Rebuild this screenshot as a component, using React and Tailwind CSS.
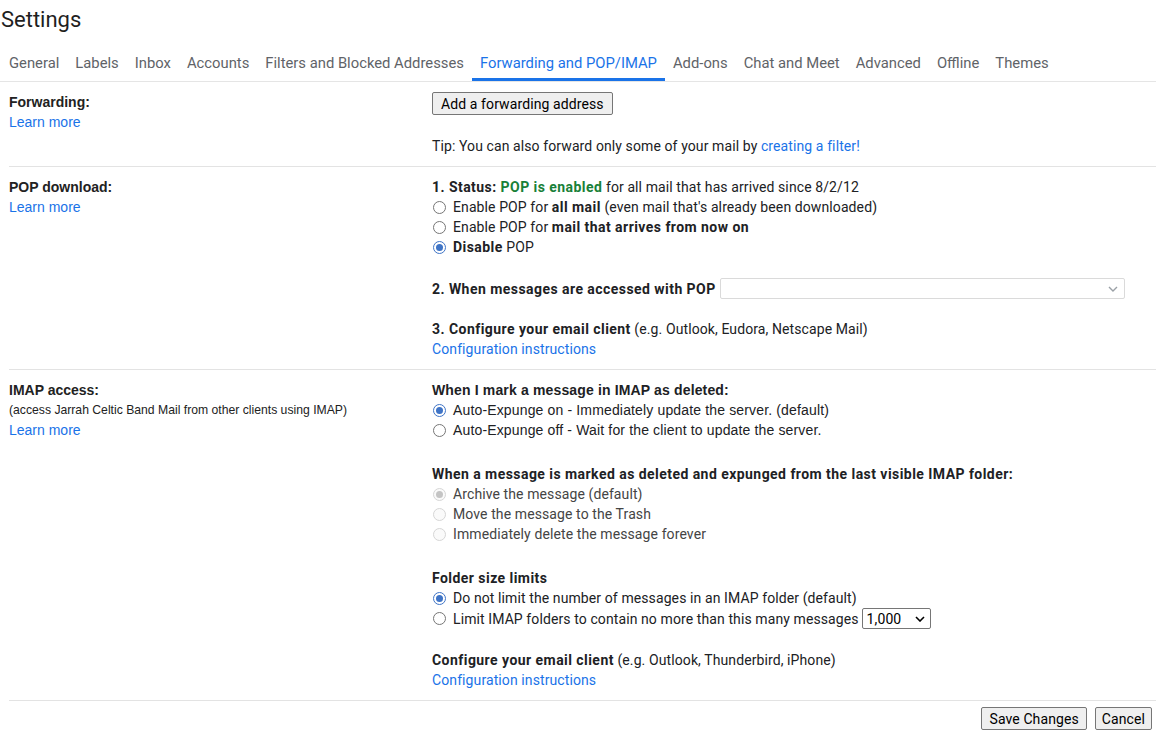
import React from 'react';

const tabs = [
  'General',
  'Labels',
  'Inbox',
  'Accounts',
  'Filters and Blocked Addresses',
  'Forwarding and POP/IMAP',
  'Add-ons',
  'Chat and Meet',
  'Advanced',
  'Offline',
  'Themes',
];

const Radio = ({ checked, disabled, children }) => {
  let ring = 'border-[#767676] bg-white';
  if (disabled) ring = 'border-[#d6d6d6] bg-[#fafafa]';
  if (checked && !disabled) ring = 'border-[#3f74c6] bg-white';
  return (
    <div className="flex items-center h-5">
      <span className={`w-[13px] h-[13px] rounded-full border flex items-center justify-center shrink-0 ml-[1px] ${ring}`}>
        {checked && (
          <span className={`w-[7px] h-[7px] rounded-full ${disabled ? 'bg-[#c4c4c4]' : 'bg-[#3f74c6]'}`} />
        )}
      </span>
      <span className={`ml-[7px] ${disabled ? 'text-[#444]' : ''}`}>{children}</span>
    </div>
  );
};

const B = ({ children, className = '' }) => (
  <b className={`font-bold tracking-[0.45px] ${className}`}>{children}</b>
);

const Link = ({ children }) => (
  <a href="#" className="text-[#1a73e8]">{children}</a>
);

const Section = ({ left, children, pb = 'pb-[10px]' }) => (
  <div className="grid grid-cols-[423px_1fr] ml-[9px] border-b border-[#e3e3e3]">
    <div className="pt-[10px] font-['Liberation_Sans',Arial,sans-serif] text-[14px] leading-5 tracking-normal text-[#222]">{left}</div>
    <div className={`pt-[10px] ${pb}`}>{children}</div>
  </div>
);

const Button = ({ children, className = '' }) => (
  <button className={`h-[23px] border border-[#767676] rounded-[2px] bg-[#efefef] text-[14px] leading-5 text-black ${className}`}>
    {children}
  </button>
);

const App = () => {
  return (
    <div className="w-[1156px] h-[739px] bg-white overflow-hidden font-['Roboto',Arial,sans-serif] text-[14px] leading-5 tracking-[0.1px] text-[#202124]">
      <div className="pl-[1px] pt-[6px] h-[36px] text-[22px] leading-[28px] tracking-normal text-[#1f1f1f]">Settings</div>

      <div className="flex border-b border-[#e5e5e5] h-[46px] pl-[1px] text-[14.8px] tracking-normal text-[#5f6368]">
        {tabs.map((t) => {
          const active = t === 'Forwarding and POP/IMAP';
          return (
            <div
              key={t}
              className={`flex items-center px-[8px] ${active ? 'text-[#1a73e8] border-b-[3px] border-[#1a73e8] pt-[11px]' : 'pt-[8px]'}`}
            >
              {t}
            </div>
          );
        })}
      </div>

      <Section
        left={
          <>
            <div className="font-bold">Forwarding:</div>
            <Link>Learn more</Link>
          </>
        }
        pb="pb-[10px]"
      >
        <Button className="px-[8px] tracking-[0.1px]">Add a forwarding address</Button>
        <div className="mt-[21px]">
          Tip: You can also forward only some of your mail by <Link>creating a filter!</Link>
        </div>
      </Section>

      <Section
        left={
          <>
            <div className="font-bold">POP download:</div>
            <Link>Learn more</Link>
          </>
        }
        pb="pb-[10px]"
      >
        <div>
          <B>1. Status: </B>
          <B className="text-[#188038]">POP is enabled</B> for all mail that has arrived since 8/2/12
        </div>
        <Radio>Enable POP for <B>all mail</B> (even mail that's already been downloaded)</Radio>
        <Radio>Enable POP for <B>mail that arrives from now on</B></Radio>
        <Radio checked><B>Disable</B> POP</Radio>
        <div className="flex items-center mt-[21px] h-[21px]">
          <B>2. When messages are accessed with POP</B>
          <div className="ml-[4px] mr-[31px] flex-1 h-[21px] border border-[#dadada] rounded-[2px] bg-white flex items-center justify-end pr-[6px]">
            <svg width="10" height="6" viewBox="0 0 10 6" fill="none" stroke="#9aa0a6" strokeWidth="1.4">
              <path d="M1 1l4 4 4-4" />
            </svg>
          </div>
        </div>
        <div className="mt-[20px]">
          <B>3. Configure your email client</B> (e.g. Outlook, Eudora, Netscape Mail)
        </div>
        <Link>Configuration instructions</Link>
      </Section>

      <Section
        left={
          <>
            <div className="font-bold">IMAP access:</div>
            <div className="text-[12.2px] leading-5 text-[#222]">(access Jarrah Celtic Band Mail from other clients using IMAP)</div>
            <Link>Learn more</Link>
          </>
        }
        pb="pb-[10px]"
      >
        <div className="font-['Liberation_Sans',Arial,sans-serif] tracking-[0.15px]">
          <b>When I mark a message in IMAP as deleted:</b>
          <Radio checked>Auto-Expunge on - Immediately update the server. (default)</Radio>
          <Radio>Auto-Expunge off - Wait for the client to update the server.</Radio>
        </div>
        <div className="mt-[24px]">
          <B>When a message is marked as deleted and expunged from the last visible IMAP folder:</B>
        </div>
        <Radio checked disabled>Archive the message (default)</Radio>
        <Radio disabled>Move the message to the Trash</Radio>
        <Radio disabled>Immediately delete the message forever</Radio>
        <div className="mt-[24px]">
          <B>Folder size limits</B>
        </div>
        <Radio checked>Do not limit the number of messages in an IMAP folder (default)</Radio>
        <div className="flex items-center h-[21px]">
          <Radio>Limit IMAP folders to contain no more than this many messages</Radio>
          <div className="ml-[3px] w-[69px] h-[21px] border border-[#767676] rounded-[2px] flex items-center justify-between pl-[4px] pr-[5px] text-black">
            <span>1,000</span>
            <svg width="10" height="6" viewBox="0 0 10 6" fill="none" stroke="#000" strokeWidth="1.6">
              <path d="M1 1l4 4 4-4" />
            </svg>
          </div>
        </div>
        <div className="mt-[21px]">
          <B>Configure your email client</B> (e.g. Outlook, Thunderbird, iPhone)
        </div>
        <Link>Configuration instructions</Link>
      </Section>

      <div className="flex justify-end gap-[8px] pr-[4px] pt-[6px]">
        <Button className="px-[7px]">Save Changes</Button>
        <Button className="px-[6px]">Cancel</Button>
      </div>
    </div>
  );
};

export default App;
